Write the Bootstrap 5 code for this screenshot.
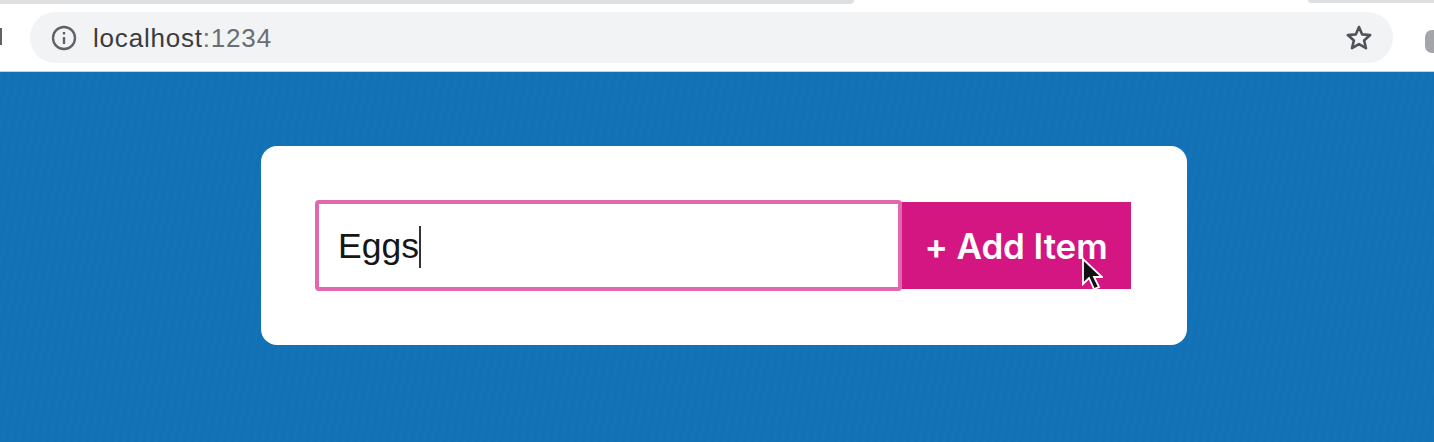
<!DOCTYPE html>
<html lang="en">
<head>
<meta charset="utf-8">
<title>Add Item</title>
<link rel="stylesheet" href="https://cdn.jsdelivr.net/npm/bootstrap@5.3.0/dist/css/bootstrap.min.css">
<style>
html,body{height:442px;overflow:hidden;background:#1272b6}
.tabstrip{height:12px;background:#fff;position:relative;overflow:hidden}
.tab-edge-a{height:4px;width:854px;background:#dedfe1;border-radius:0 0 8px 0}
.tab-edge-b{position:absolute;left:1308px;right:0;top:0;height:3px;background:#dedfe1;border-radius:0 0 0 6px}
.toolbar{height:60px;background:#fff;position:relative;border-bottom:1px solid #b9d4e8}
.omni{margin-left:30px;width:1363px;height:51px;background:#f1f3f4;border-radius:25px;padding:0 20px 0 21px;font:26px/1 "Liberation Sans",Arial,sans-serif;letter-spacing:.8px;color:#3a3c3f}
.omni .port{color:#6b6e72}
.omni svg{flex:none}
.host-text{margin-left:16px}
.back-frag{position:absolute;left:-3px;top:16px;width:5px;height:17px;background:#5f6368}
.ext-frag{position:absolute;left:1425px;top:18px;width:20px;height:23px;background:#a3a5a8;border-radius:7px}
.stage{height:370px;padding-top:74px;background:#1272b6;background-image:repeating-linear-gradient(100deg,rgba(255,255,255,.007) 0 4px,rgba(0,0,0,.007) 4px 8px)}
.panel{width:926px;height:199px;background:#fff;border-radius:16px;padding:54px 55px;margin-left:261px}
.entry{width:587px;height:91px;margin-left:-1px;border:4px solid #e168ad;border-radius:4px;padding:2px 0 0 19px;font:35.500px/1 "Liberation Sans",Arial,sans-serif;color:#161616;background:#fff;margin-right:-1px;position:relative;z-index:1}
.caret-line{display:inline-block;width:2px;height:42px;background:#333;vertical-align:middle;margin-left:0}
.add-btn{width:230px;height:87px;margin-top:2px;border:0;border-radius:0;background:#d41682;color:#fff;font:600 35px/1 Inter,"Liberation Sans",sans-serif;padding:2px 0 0;position:relative;letter-spacing:-.1px}
.add-btn:hover,.add-btn:active{background:#d41682!important;color:#fff!important}
.pointer{position:absolute;left:180px;top:55px;width:22px;height:33px}
</style>
</head>
<body>
<div class="tabstrip"><div class="tab-edge-a"></div><div class="tab-edge-b"></div></div>
<div class="toolbar">
  <span class="back-frag"></span>
  <div class="omni d-flex align-items-center">
    <svg width="26" height="26" viewBox="0 0 26 26" fill="none" stroke="#5f6368" stroke-width="2.4"><circle cx="13" cy="13" r="11"/><path d="M13 12v7M13 7v2.6"/></svg>
    <span class="host-text">localhost<span class="port">:1234</span></span>
    <svg class="ms-auto" width="28" height="28" viewBox="0 0 28 28" fill="none" stroke="#505458" stroke-width="2.6" stroke-linejoin="round"><path d="M14 3l3.2 7.4 8 .7-6.1 5.3 1.9 7.8L14 20.1 7 24.2l1.900-7.800L2.800 11.100l8-.7z"/></svg>
  </div>
  <span class="ext-frag"></span>
</div>
<main class="stage">
  <div class="panel d-flex align-items-start">
    <div class="entry d-flex align-items-center"><span>Eggs</span><span class="caret-line"></span></div>
    <button type="button" class="btn add-btn">+ Add Item
      <svg class="pointer" viewBox="0 0 22 33"><path d="M2 2v25l6-6 5 11 5-2-5-10h8z" fill="#111" stroke="#fff" stroke-width="1.800"/></svg>
    </button>
  </div>
</main>
<script src="https://cdn.jsdelivr.net/npm/bootstrap@5.3.0/dist/js/bootstrap.bundle.min.js"></script>
</body>
</html>
